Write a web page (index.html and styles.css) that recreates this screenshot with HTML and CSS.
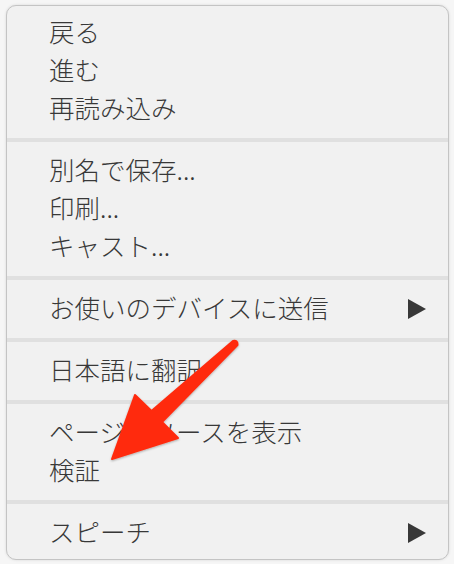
FILE: index.html
```html
<!DOCTYPE html>
<html lang="ja">
<head>
<meta charset="utf-8">
<link rel="stylesheet" href="styles.css">
</head>
<body>
<div class="menu">
  <div class="group first">
    <div class="item">戻る</div>
    <div class="item">進む</div>
    <div class="item">再読み込み</div>
  </div>
  <div class="sep"></div>
  <div class="group">
    <div class="item">別名で保存...</div>
    <div class="item">印刷...</div>
    <div class="item">キャスト...</div>
  </div>
  <div class="sep"></div>
  <div class="group">
    <div class="item sub">お使いのデバイスに送信<span class="tri"></span></div>
  </div>
  <div class="sep"></div>
  <div class="group">
    <div class="item">日本語に翻訳</div>
  </div>
  <div class="sep"></div>
  <div class="group">
    <div class="item">ページのソースを表示</div>
    <div class="item">検証</div>
  </div>
  <div class="sep"></div>
  <div class="group last">
    <div class="item sub">スピーチ<span class="tri"></span></div>
  </div>
  <svg class="arrow" width="454" height="564" viewBox="0 0 454 564">
    <defs>
      <filter id="sh" x="-20%" y="-20%" width="140%" height="140%">
        <feDropShadow dx="0" dy="1" stdDeviation="1.2" flood-color="#000" flood-opacity="0.3"/>
      </filter>
    </defs>
    <path filter="url(#sh)" fill="#ff2a0c" stroke="#ff2a0c" stroke-width="2" stroke-linejoin="round"
      d="M233 341 L151.5 411 L135 395 L112 459 L178 438 L162 422 L237.5 345 Q238 340 233 341 Z"/>
  </svg>
</div>
</body>
</html>
```
FILE: styles.css
```css
html, body {
  margin: 0;
  padding: 0;
  background: #f6f6f6;
}
body {
  padding: 5px 5px 5px 6px;
  font-family: "Noto Sans CJK JP", "Noto Sans", sans-serif;
}
.menu {
  width: 441px;
  background: #f1f1f1;
  border: 1px solid #c4c4c4;
  border-radius: 10px;
  box-shadow: 0 0 3px rgba(0,0,0,0.12);
  overflow: hidden;
}
.group {
  padding: 10px 0;
}
.group.first { padding-top: 8px; }
.group.last { padding-bottom: 7px; }
.sep {
  height: 4px;
  background: #e0e0e0;
}
.item {
  box-sizing: border-box;
  height: 38px;
  padding: 0 22px 4px 42px;
  font-size: 25.5px;
  font-weight: 300;
  line-height: 1;
  color: #383838;
  display: flex;
  align-items: center;
  justify-content: space-between;
  white-space: nowrap;
}
.tri {
  width: 0;
  height: 0;
  margin-top: 4px;
  border-top: 10px solid transparent;
  border-bottom: 10px solid transparent;
  border-left: 18px solid #383838;
}
.arrow {
  position: absolute;
  left: 0;
  top: 0;
  pointer-events: none;
}
```
